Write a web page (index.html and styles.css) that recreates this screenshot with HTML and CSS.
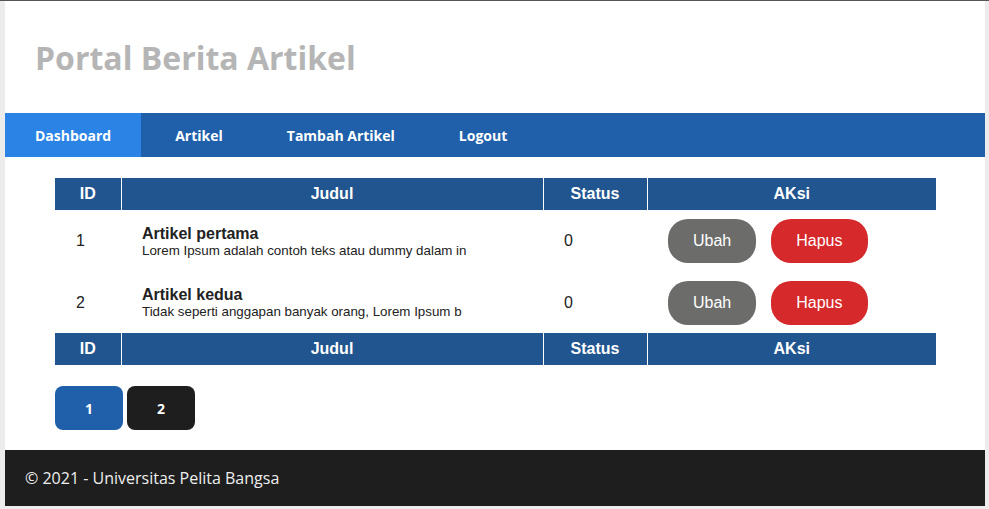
FILE: index.html
```html
<!DOCTYPE html>
<html lang="id">
<head>
<meta charset="utf-8">
<title>Portal Berita Artikel</title>
<link rel="stylesheet" href="styles.css">
</head>
<body>
<div class="container">
  <header class="header">
    <h1 class="brand">Portal Berita Artikel</h1>
  </header>
  <nav class="nav">
    <a class="nav-link active" href="#">Dashboard</a>
    <a class="nav-link" href="#">Artikel</a>
    <a class="nav-link" href="#">Tambah Artikel</a>
    <a class="nav-link" href="#">Logout</a>
  </nav>
  <main class="content">
    <table class="table">
      <colgroup>
        <col class="c-id"><col class="c-judul"><col class="c-status"><col class="c-aksi">
      </colgroup>
      <thead>
        <tr><th>ID</th><th>Judul</th><th>Status</th><th>AKsi</th></tr>
      </thead>
      <tbody>
        <tr>
          <td>1</td>
          <td><div class="title">Artikel pertama</div><div class="desc">Lorem Ipsum adalah contoh teks atau dummy dalam in</div></td>
          <td>0</td>
          <td><div class="actions"><a class="btn btn-gray" href="#">Ubah</a><a class="btn btn-red" href="#">Hapus</a></div></td>
        </tr>
        <tr>
          <td>2</td>
          <td><div class="title">Artikel kedua</div><div class="desc">Tidak seperti anggapan banyak orang, Lorem Ipsum b</div></td>
          <td>0</td>
          <td><div class="actions"><a class="btn btn-gray" href="#">Ubah</a><a class="btn btn-red" href="#">Hapus</a></div></td>
        </tr>
      </tbody>
      <tfoot>
        <tr><th>ID</th><th>Judul</th><th>Status</th><th>AKsi</th></tr>
      </tfoot>
    </table>
    <div class="pagination">
      <a class="page active" href="#">1</a>
      <a class="page" href="#">2</a>
    </div>
  </main>
  <footer class="footer">© 2021 - Universitas Pelita Bangsa</footer>
</div>
</body>
</html>
```
FILE: styles.css
```css
html, body {
  margin: 0;
  padding: 0;
}
body {
  background: #ececec;
  border-top: 1px solid #555;
  font-family: "Open Sans", sans-serif;
}
.container {
  width: 980px;
  margin-left: 5px;
  background: #fff;
}
.header {
  height: 112px;
  display: flex;
  align-items: center;
  padding-left: 30px;
}
.brand {
  margin: 0;
  font-family: "Open Sans", sans-serif;
  font-weight: 700;
  font-size: 32px;
  color: #b5b5b5;
}
.nav {
  display: flex;
  gap: 4px;
  background: #2060aa;
  height: 44px;
}
.nav-link {
  display: flex;
  align-items: center;
  padding: 0 30px;
  color: #fff;
  text-decoration: none;
  font-weight: 700;
  font-size: 14px;
}
.nav-link.active {
  background: #2b83e6;
}
.content {
  padding: 21px 49px 20px 50px;
}
.table {
  width: 100%;
  border-collapse: collapse;
  font-family: "Liberation Sans", Arial, sans-serif;
}
.c-id { width: 66px; }
.c-judul { width: 422px; }
.c-status { width: 104px; }
th {
  background: #215590;
  color: #fff;
  font-weight: 700;
  font-size: 16px;
  height: 32px;
  padding: 0;
  border-right: 1px solid #fff;
  text-align: center;
}
th:last-child { border-right: 0; }
td {
  padding: 9px 20px 8.5px 21px;
  font-size: 16px;
  color: #222;
  vertical-align: middle;
  text-align: left;
}
.title {
  font-weight: 700;
  font-size: 16px;
  line-height: 18px;
  color: #222;
}
.desc {
  font-size: 13.33px;
  line-height: 15px;
  color: #222;
}
.actions {
  display: flex;
  gap: 15px;
}
.btn {
  display: flex;
  align-items: center;
  height: 44px;
  padding: 0 25px;
  border-radius: 20px;
  color: #fff;
  text-decoration: none;
  font-size: 16px;
}
.btn-gray { background: #6c6d6a; }
.btn-red { background: #d5292b; }
.pagination {
  display: flex;
  gap: 4px;
  margin-top: 21px;
}
.page {
  width: 68px;
  height: 44px;
  display: flex;
  align-items: center;
  justify-content: center;
  border-radius: 8px;
  background: #1e1e1e;
  color: #fff;
  text-decoration: none;
  font-weight: 700;
  font-size: 14px;
}
.page.active { background: #2060aa; }
.footer {
  background: #1e1e1e;
  color: #eee;
  height: 56px;
  display: flex;
  align-items: center;
  padding-left: 20px;
  font-size: 16px;
}
```
